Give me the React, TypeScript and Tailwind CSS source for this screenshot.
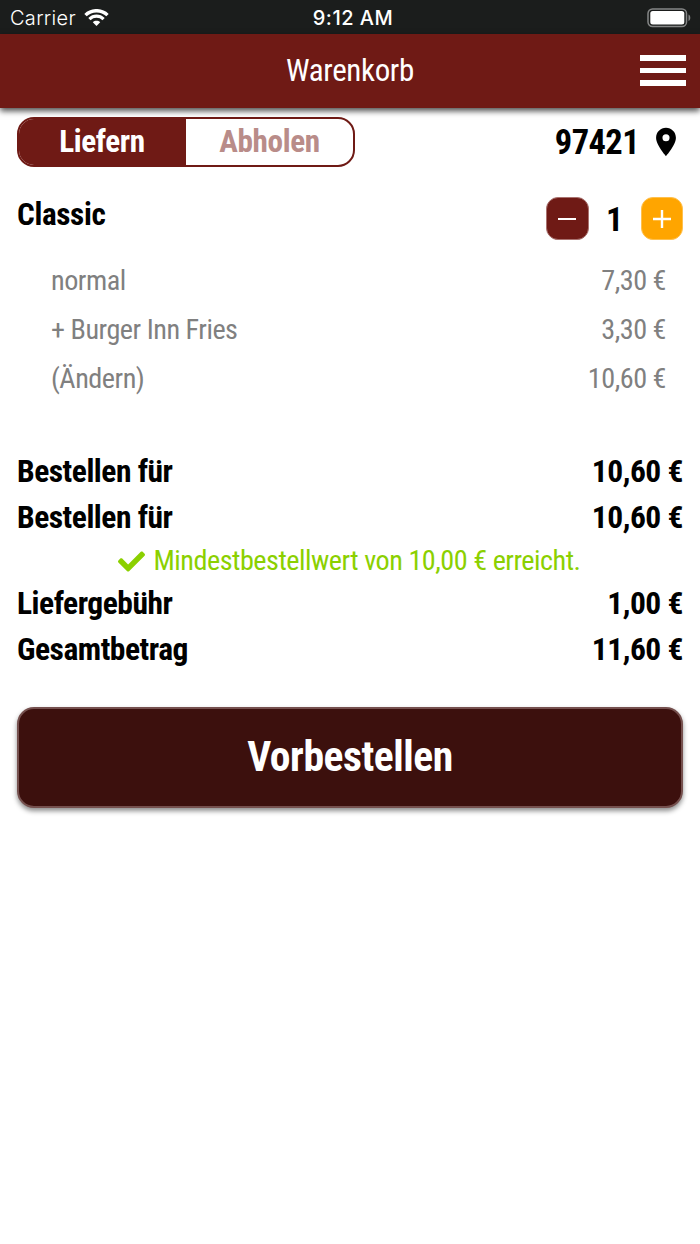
import { FaCheck } from 'react-icons/fa';
import { MdLocationOn } from 'react-icons/md';

interface Position {
  label: string;
  price: string;
}

const positions: Position[] = [
  { label: 'normal', price: '7,30 €' },
  { label: '+ Burger Inn Fries', price: '3,30 €' },
  { label: '(Ändern)', price: '10,60 €' },
];

function StatusBar() {
  return (
    <div className="flex h-[34px] items-center justify-between bg-[#1b1d1c] pl-[10px] pr-[9px] pt-px font-['Inter',sans-serif] text-[20px] text-white">
      <div className="flex w-[200px] items-center gap-[8px]">
        <span className="font-light tracking-[0.3px]">Carrier</span>
        <svg width="25" height="18" viewBox="0 0 25 18" fill="none" stroke="#fff">
          <path d="M1.5 6.1C7.5 .2 17.5 .2 23.5 6.1" strokeWidth="3.4" />
          <path d="M5.4 10.1C9.5 6.2 15.5 6.2 19.6 10.1" strokeWidth="3.2" />
          <path d="M12.5 17L8.8 13.2C10.9 11.3 14.1 11.3 16.2 13.2Z" fill="#fff" stroke="none" />
        </svg>
      </div>
      <span className="pl-[5px] font-medium tracking-[0.5px]">9:12 AM</span>
      <div className="flex w-[200px] justify-end">
        <svg width="44" height="20" viewBox="0 0 44 20">
          <rect x="1" y="1" width="38.5" height="17.5" rx="4.5" fill="none" stroke="#858686" strokeWidth="1.5" />
          <rect x="3.3" y="3" width="34" height="13.5" rx="2.5" fill="#fff" />
          <path d="M41.5 6.5C43.9 7.5 43.9 12 41.5 13Z" fill="#858686" />
        </svg>
      </div>
    </div>
  );
}

function Header() {
  return (
    <header className="relative flex h-[74px] items-center justify-center bg-[#6f1a15] shadow-[0_3px_6px_rgba(0,0,0,0.7)]">
      <h1 className="pb-px text-[31px] leading-none tracking-[-0.35px] text-white">Warenkorb</h1>
      <button className="absolute right-[14px] top-[21px] flex flex-col gap-[7px]">
        <span className="h-[5.5px] w-[46px] bg-white" />
        <span className="h-[5.5px] w-[46px] bg-white" />
        <span className="h-[5.5px] w-[46px] bg-white" />
      </button>
    </header>
  );
}

function SumRow({ label, price }: Position) {
  return (
    <div className="flex h-[46px] items-center justify-between pb-px text-[31.5px] font-bold leading-none tracking-[-0.48px]">
      <span>{label}</span>
      <span>{price}</span>
    </div>
  );
}

export default function App() {
  return (
    <div className="min-h-[1244px] w-[700px] bg-white font-['Roboto_Condensed',Roboto,sans-serif] text-black [font-stretch:75%]">
      <StatusBar />
      <Header />
      <main className="px-[17px] pt-[9px]">
        <div className="flex h-[50px] items-center justify-between">
          <div className="flex h-[50px] w-[338px] overflow-hidden rounded-[17px] border-2 border-[#6f1a15] text-[31.2px] font-bold leading-[45px] tracking-[-0.35px]">
            <button className="w-[167px] bg-[#6f1a15] pb-[2px] pr-px text-white">Liefern</button>
            <button className="flex-1 pb-[2px] text-[#b98c89]">Abholen</button>
          </div>
          <div className="flex items-center gap-[10px] text-[34.5px] font-bold leading-none">
            <span className="tracking-[-0.6px]">97421</span>
            <MdLocationOn className="mb-px size-[34px]" />
          </div>
        </div>

        <div className="mt-[30px] flex h-[43px] items-center justify-between">
          <h2 className="pb-[8px] text-[31.2px] font-bold leading-none tracking-[-0.35px]">Classic</h2>
          <div className="flex items-center">
            <button className="flex size-[42.5px] items-center justify-center rounded-[12px] border border-[#a9726f] bg-[#6f1a15]">
              <span className="h-[2px] w-[18px] bg-white" />
            </button>
            <span className="w-[52px] text-center text-[34px] font-bold leading-none">1</span>
            <button className="flex size-[42.5px] items-center justify-center rounded-[12px] border border-[#ffc04d] bg-[#ffa500]">
              <svg width="18" height="18" viewBox="0 0 18 18" stroke="#fff" strokeWidth="2.4">
                <path d="M0 9H18M9 0V18" />
              </svg>
            </button>
          </div>
        </div>

        <div className="mt-[17px] pl-[34px] pr-[17px] text-[28.2px] leading-none tracking-[-0.48px] text-[#808080]">
          {positions.map((position) => (
            <div key={position.label} className="flex h-[49px] items-center justify-between pb-px">
              <span>{position.label}</span>
              <span>{position.price}</span>
            </div>
          ))}
        </div>

        <div className="mt-[45px]">
          <SumRow label="Bestellen für" price="10,60 €" />
          <SumRow label="Bestellen für" price="10,60 €" />
          <div className="flex h-[40px] items-center justify-center gap-[8px] pr-px text-[28.2px] leading-none tracking-[-0.48px] text-[#8bd000]">
            <FaCheck className="size-[27px]" />
            <span className="pt-px">Mindestbestellwert von 10,00 € erreicht.</span>
          </div>
          <SumRow label="Liefergebühr" price="1,00 €" />
          <SumRow label="Gesamtbetrag" price="11,60 €" />
        </div>

        <button className="mt-[34px] flex h-[101px] w-full items-center justify-center rounded-[17px] border-2 border-[#75504e] bg-[#3c100d] pb-px text-[41.6px] font-bold leading-none tracking-[-0.45px] text-white shadow-[0_3px_5px_rgba(0,0,0,0.45)]">
          Vorbestellen
        </button>
      </main>
    </div>
  );
}
